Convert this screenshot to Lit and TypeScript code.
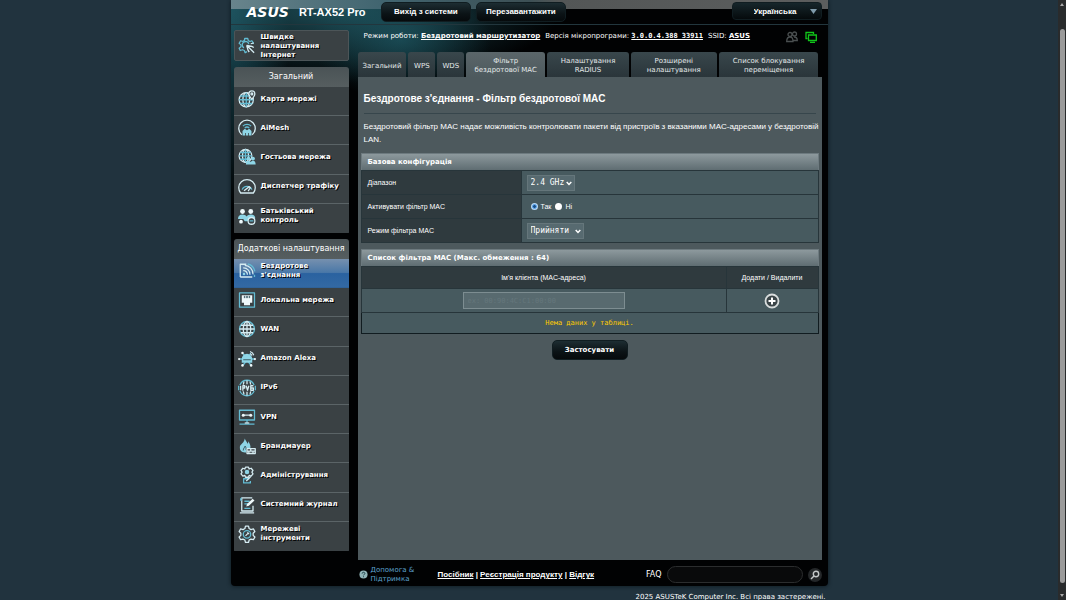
import { LitElement, html, css, svg, TemplateResult } from "lit";
import { customElement, property, state } from "lit/decorators.js";
import { classMap } from "lit/directives/class-map.js";

interface Entry {
  label: string;
  icon: string;
}

const GENERAL: Entry[] = [
  { label: "Карта мережі", icon: "map" },
  { label: "AiMesh", icon: "mesh" },
  { label: "Гостьова мережа", icon: "guest" },
  { label: "Диспетчер трафіку", icon: "traffic" },
  { label: "Батьківський контроль", icon: "family" },
];

const ADVANCED: Entry[] = [
  { label: "Бездротове з'єднання", icon: "wireless" },
  { label: "Локальна мережа", icon: "lan" },
  { label: "WAN", icon: "wan" },
  { label: "Amazon Alexa", icon: "alexa" },
  { label: "IPv6", icon: "ipv6" },
  { label: "VPN", icon: "vpn" },
  { label: "Брандмауер", icon: "firewall" },
  { label: "Адміністрування", icon: "admin" },
  { label: "Системний журнал", icon: "log" },
  { label: "Мережеві інструменти", icon: "tools" },
];

const TABS = [
  "Загальний",
  "WPS",
  "WDS",
  "Фільтр бездротової MAC",
  "Налаштування RADIUS",
  "Розширені налаштування",
  "Список блокування переміщення",
];

const ICONS: Record<string, TemplateResult> = {
  quick: svg`
    <path class="b" d="M12 19.500 9.500 21l-1-3-2.500-1-3 1-1.500-3L4 13v-2.500L1.500 8.500 3.500 5l3 1 2-1.500L9 2h4l.7 2.800L16 6l2.500-1 2 3.200-1 .8"/>
    <path class="b" d="M8 14.500a4.500 4.500 0 1 1 6.500-5"/>
    <path d="m11.500 11 10 10M11.500 11l2 7M11.500 11l7 1.500M15 20l-1.500-2M21 14l-2.500-1.500"/>
    <path d="M17 9l4-1"/>`,
  map: svg`
    <circle cx="11" cy="13" r="9.500"/>
    <ellipse cx="11" cy="13" rx="4.500" ry="9.500"/>
    <path class="b" d="M11 3.500v19M1.500 13h19M3 8h13M3 18h16"/>
    <path class="hole" d="M18.500 12.500c-3-4-4-5.200-4-7.200a4 4 0 0 1 8 0c0 2-1 3.200-4 7.200z"/>
    <circle cx="18.500" cy="5.200" r="1.200"/>`,
  mesh: svg`
    <path d="M5 21a11 11 0 1 1 14 0"/>
    <path class="b" d="M6.500 9.500a8 8 0 0 1 11 0M9 12a4.500 4.500 0 0 1 6 0"/>
    <path class="f" d="M6 22v-6l3-3 3 2 3-2 3 3v6h-3.500v-3.500h-1V22h-3v-3.500h-1V22z"/>`,
  guest: svg`
    <circle cx="10" cy="10.500" r="8.500"/>
    <ellipse cx="10" cy="10.500" rx="4" ry="8.500"/>
    <path class="b" d="M10 2v17M1.500 10.500h17M3 6h14M3 15h9"/>
    <circle class="f" cx="14" cy="14" r="2.500"/><circle class="f" cx="20" cy="14" r="2.500"/>
    <path class="f" d="M10.500 22c0-3 1-5 3.500-5 1.500 0 2.500.7 3 2 .5-1.300 1.500-2 3-2 2.500 0 3.500 2 3.500 5z"/>`,
  traffic: svg`
    <path d="M3.500 20a11 11 0 1 1 17 0z"/>
    <path class="b" d="M5.500 15.500a7 7 0 0 1 13 0"/>
    <path d="m8 17 7-5.500 1.500 1.500-3 4.500"/>`,
  family: svg`
    <circle class="w" cx="6" cy="6" r="3.200"/><circle class="w" cx="17" cy="6" r="3.200"/>
    <path class="f" d="M0 16c0-4 2-6 6-6 2.500 0 4 1 5.500 2.500C13 11 14.500 10 17 10c4 0 6 2 6 5l-8 1-2 3H9l-2-3z"/>
    <circle class="w" cx="4" cy="19.500" r="2.500"/>
    <circle class="hole" cx="18" cy="18.500" r="4.500"/>
    <path class="b" d="M15.500 18.500h5"/>`,
  wireless: svg`
    <path d="M3 20V3h8M3 20h16"/>
    <circle class="f" cx="8" cy="16" r="1.800"/>
    <path d="M7 11.500a5 5 0 0 1 5.500 5.500M7 8a8.500 8.500 0 0 1 9 9M9 4.500A11.500 11.500 0 0 1 20 16.500"/>
    <path class="b" d="M13 2.500a13 13 0 0 1 9.500 10M22 20v-3"/>`,
  lan: svg`
    <path class="b" d="M2 2.500h20v19H2z"/>
    <path class="w" d="M5 5.500h14v10h-3v3.500H8v-3.500H5z"/>
    <path class="d" d="M8.500 6.500v3M11 6.500v3M13 6.500v3M15.500 6.500v3"/>`,
  wan: svg`
    <circle class="b" cx="12" cy="12" r="10"/>
    <ellipse cx="12" cy="12" rx="5" ry="10"/>
    <path d="M12 2v20M2 12h20M4 7h16M4 17h16"/>`,
  alexa: svg`
    <path class="b" d="M2 12h20M7 5l3 4M17 4l-3 5M7 20l3-4M17 20l-3-4"/>
    <circle class="w" cx="1.500" cy="12" r="1.500"/><circle class="w" cx="22.500" cy="12" r="1.500"/>
    <circle class="w" cx="6" cy="4" r="1.700"/><circle class="w" cx="6" cy="20.500" r="1.700"/><circle class="w" cx="17.500" cy="20.500" r="1.700"/>
    <path class="f" d="M5 12a7 7 0 0 1 14 0v5H5z"/>
    <path class="d" d="M7 13h10"/>
    <path d="M16 2a7 7 0 0 1 5 5M16 5a4 4 0 0 1 2.500 2.500"/>`,
  ipv6: svg`
    <path class="b" d="M2.500 8a10.300 10.300 0 0 1 19 0M2.500 16a10.300 10.300 0 0 0 19 0M0.900 9v6M23.100 9v6"/>
    <path d="M12 2v5M12 17v5M8 3.500l-1 4M16 3.500l1 4M7 16.500l1 4M17 16.500l-1 4"/>
    <path d="M3.500 9v6M6.500 15.500V9H9v3H6.500M11 9l1.700 6L14.500 9M20.500 9H17v6h3.500v-3H17"/>`,
  vpn: svg`
    <path class="b" d="M2 3h20v13H2zM12 16v4M2 21.500h20"/>
    <path d="M7 9.500h10"/>
    <circle class="w" cx="7" cy="9.500" r="2"/><circle class="w" cx="17" cy="9.500" r="2"/>
    <path d="M9 20h6"/>`,
  firewall: svg`
    <path class="f" d="M9 2c1 3 3 4 3.500 7 1-1 1.200-2 1-3.500 2.500 3 3.500 6 3 9H11v6c-6 1-9-3-8.500-7.500C3 9.500 8.500 8 9 2z"/>
    <path class="d" d="M7 18c0-3 2-4 2.500-6 1 1.500 1.500 3 1 5"/>
    <path d="M12 15.500h11v6.500H12zM12 18.700h11M17 15.500v3M20 18.700v3M14.500 18.700v3"/>`,
  admin: svg`
    <path d="M10 1.500h4l.8 2.500L17.500 3l2.500 3-1.500 2.200 1.500 2.300-2.500 3-2.700-1-.8 2.500h-4l-.8-2.500-2.700 1-2.500-3 1.500-2.300L4 6l2.500-3 2.700 1z"/>
    <circle class="f" cx="12" cy="8" r="3"/>
    <path class="b" d="M15 17H7.500v5.500h9V20"/><path d="m11 20 6-6"/>`,
  log: svg`
    <path d="M20 13v7H5V2.500h14M2.500 22.500h19"/>
    <path class="b" d="M5 3c-2 0-2 3 0 3M8.500 7h7M8.500 10.500h5M8.500 16.500h8"/>
    <path class="w" d="m11 14 1-3.500 7.500-7 2.500 2.500-7.500 7z"/>`,
  tools: svg`
    <path d="M10 1.500h4l.8 3.200 2.500 1.400 3.200-.9 2 3.500-2.300 2.300v2.800l2.300 2.300-2 3.500-3.200-.9-2.500 1.400-.8 3.200h-4l-.8-3.200-2.500-1.400-3.200.9-2-3.500 2.300-2.300V11L1.500 8.700l2-3.500 3.200.9 2.500-1.400z"/>
    <circle class="b" cx="12" cy="12.400" r="5"/>
    <path d="m10 14.500 3-3M13 9.500l.2 1.800 1.800.2"/>`,
};

@customElement("menu-icon")
export class MenuIcon extends LitElement {
  @property() name = "";

  static styles = css`
    :host {
      display: block;
      width: 18px;
      height: 18px;
    }
    svg {
      display: block;
      width: 100%;
      height: 100%;
      fill: none;
      stroke: #d5ecf2;
      stroke-width: 1.7;
      stroke-linejoin: round;
    }
    .b { stroke: #63bcd3; }
    .w { fill: #eef8fa; stroke: none; }
    .f { fill: #8ed5e6; stroke: none; }
    .d { stroke: #3b5964; stroke-width: 1.3; }
    .hole { fill: #3a4144; }
  `;

  render() {
    return html`<svg viewBox="0 0 24 24" aria-hidden="true">${ICONS[this.name]}</svg>`;
  }
}

@customElement("side-menu")
export class SideMenu extends LitElement {
  @property() heading = "";
  @property() current = "";
  @property({ attribute: false }) entries: Entry[] = [];

  static styles = css`
    :host {
      display: flex;
      flex-direction: column;
      overflow: hidden;
      border-radius: 3px 3px 1px 1px;
      color: #fff;
      font-family: "DejaVu Sans", Verdana, sans-serif;
    }
    .heading {
      margin: 0;
      height: 20px;
      background: linear-gradient(#4a5356, #565e60);
      font-size: 8px;
      font-weight: 400;
      line-height: 20px;
      text-align: center;
      white-space: nowrap;
    }
    .list {
      display: grid;
      grid-auto-rows: 1fr;
      flex: 1;
      margin: 0;
      padding: 0;
      list-style: none;
    }
    .item { display: grid; }
    .link {
      box-sizing: border-box;
      display: grid;
      grid-template-columns: 18px 1fr;
      align-items: center;
      gap: 5px;
      min-height: 29px;
      padding: 0 3px 4px 4px;
      border-bottom: 1px solid #5b6467;
      background: #3a4144;
      color: #fff;
      font-size: 7px;
      font-weight: 700;
      line-height: 9px;
      text-decoration: none;
      text-shadow: 1px 1px 0 #000;
    }
    .item:last-child .link {
      border-bottom-color: #3a4144;
    }
    .link.current {
      border-bottom-color: #2f6299;
      background: linear-gradient(#7690ae, #4a78a8 48%, #2a62a0 52%, #3369a3);
    }
  `;

  render() {
    return html`
      <h2 class="heading">${this.heading}</h2>
      <ul class="list">
        ${this.entries.map(
          (e) => html`<li class="item">
            <a href="#" class=${classMap({ link: true, current: e.label === this.current })}>
              <menu-icon name=${e.icon}></menu-icon><span>${e.label}</span>
            </a>
          </li>`
        )}
      </ul>
    `;
  }
}

@customElement("app-root")
export class AppRoot extends LitElement {
  @state() private enabled = true;

  static styles = css`
    :host {
      display: flex;
      height: 100vh;
      overflow: hidden;
      background: #21333e;
      color: #fff;
      font-family: "DejaVu Sans", Verdana, sans-serif;
      font-size: 7px;
      line-height: 9px;
    }
    * { box-sizing: border-box; }
    button, input, select { font: inherit; color: inherit; margin: 0; }
    a { color: inherit; }

    .page { flex: 1; min-width: 0; }
    .wrap { width: 100%; max-width: 597px; margin: 0 auto; }
    .shell {
      padding: 0 6px 0 3px;
      border-radius: 0 0 4px 4px;
      background:
        radial-gradient(ellipse 220px 75px at 110px 8px, #24606ccc, transparent),
        radial-gradient(ellipse 90px 60px at 170px 40px, #1b5561aa, transparent),
        radial-gradient(ellipse 60px 210px at 0 0, #1a4c58, transparent),
        #010203;
      box-shadow: 0 0 4px #0b161c;
    }

    .bar {
      display: flex;
      align-items: flex-start;
      gap: 5px;
      height: 25px;
      margin: 0 -6px 5px -3px;
      padding: 2px 6px 0 16px;
      border-bottom: 1px solid #22363d;
      background: linear-gradient(90deg, #68848c, #416570 25%, #3d5055 50%, #535656 55%, #5c5e5e) 0 0 / 100% 9px no-repeat;
      font-family: "Liberation Sans", Arial, sans-serif;
    }
    .logo {
      font: italic 700 14px/20px "DejaVu Sans", Verdana, sans-serif;
    }
    .model { flex: 0 0 82px; margin: 0; padding-left: 5px; font-size: 11px; font-weight: 700; line-height: 20px; white-space: nowrap; }
    .btn {
      height: 20px;
      padding: 0 10px;
      border: 1px solid #101d21;
      border-radius: 5px;
      background: linear-gradient(#1d2d32, #0b1316 60%, #060a0c);
      font-family: "DejaVu Sans", Verdana, sans-serif;
      font-size: 7px;
      font-weight: 700;
      line-height: 16px;
    }
    .btn.top { width: 90px; padding: 0; font-family: "Liberation Sans", Arial, sans-serif; font-size: 8px; }
    .lang { position: relative; width: 90px; margin-left: auto; }
    .lang-select {
      width: 100%;
      height: 18px;
      padding: 0 20px 0 21px;
      border: 1px solid #101d21;
      border-radius: 4px;
      appearance: none;
      background: linear-gradient(#16262b, #050a0c);
      font-size: 8px;
      font-weight: 700;
    }
    .lang-arrow { position: absolute; right: 5px; top: 7px; width: 7px; height: 5px; fill: #7f9bab; pointer-events: none; }

    .columns { display: grid; grid-template-columns: 115px 1fr; gap: 9px; }
    .side { display: flex; flex-direction: column; gap: 6px; padding-bottom: 9px; }
    .general { min-height: 166px; }
    .advanced { min-height: 312px; }
    .quick {
      display: grid;
      grid-template-columns: 18px 1fr;
      align-items: center;
      gap: 5px;
      height: 31px;
      padding: 1px 3px 0;
      border: 1px solid #4c5558;
      border-radius: 2px;
      background: #3a4144;
      font-weight: 700;
      text-decoration: none;
      text-shadow: 1px 1px 0 #000;
    }
    .main { display: flex; flex-direction: column; }

    .status { display: flex; align-items: center; gap: 5px; height: 13px; padding: 0 5px 0 6px; white-space: nowrap; }
    .status a { font-weight: 700; }
    .status .mono { font-family: "DejaVu Sans Mono", monospace; font-size: 7px; }
    .state-icons { display: flex; gap: 7px; margin-left: auto; }
    .state-icons svg { width: 12px; height: 12px; fill: none; stroke: #4a4f50; stroke-width: 1.3; }
    .state-icons .on { stroke: #11c61a; }

    .tabs {
      display: grid;
      grid-template-columns: 49fr 27fr 27fr 79fr 82fr 86fr 100fr;
      gap: 2px;
      margin-top: 9px;
      padding-right: 3px;
    }
    .tab {
      display: flex;
      align-items: center;
      justify-content: center;
      height: 25px;
      padding: 3px 4px 0;
      border-radius: 3px 3px 0 0;
      background: linear-gradient(#39474c, #2a353a);
      color: #e4e9ea;
      text-align: center;
      text-decoration: none;
    }
    .tab.current { background: linear-gradient(#5b666a, #4d595d); }

    .panel {
      flex: 1;
      padding: 15px 3px;
      background: #4d595d;
      font-family: "Liberation Sans", Arial, sans-serif;
    }
    .title { margin: 0 3px; padding-bottom: 7px; border-bottom: 1px solid #37464c; font-size: 10px; font-weight: 700; line-height: 14px; }
    .intro { margin: 6px 0 7px 3px; font-size: 8px; line-height: 13px; }

    .grid { width: 100%; border-collapse: collapse; table-layout: fixed; border: 1px solid #27353a; }
    .grid + .grid { margin-top: 6px; }
    .grid caption {
      height: 17px;
      padding-left: 6px;
      border: 1px solid #6d7a7f;
      border-bottom: 0;
      background: linear-gradient(#8d999d, #5f6d72);
      font-family: "DejaVu Sans", Verdana, sans-serif;
      font-weight: 700;
      line-height: 16px;
      text-align: left;
    }
    .grid th, .grid td { height: 24px; padding: 0 5px; border: 1px solid #27353a; background: #475a5f; font-size: 7px; font-weight: 400; text-align: left; }
    .grid th { padding: 0 6px; background: #2f3a3e; }
    .grid .name { width: 160px; }
    .grid .act { width: 92px; }
    .grid .mid { text-align: center; }
    .grid .mid.head { height: 22px; }
    .grid .empty { height: 21px; border-color: #111c20; color: #fc0; font-family: "DejaVu Sans Mono", monospace; text-align: center; }

    .pick { position: relative; display: block; width: max-content; }
    .pick select {
      display: block;
      height: 16px;
      padding: 0 0 0 3px;
      border: 1px solid #65767b;
      appearance: none;
      background: #576a70;
      font-family: "DejaVu Sans Mono", monospace;
      font-size: 8px;
    }
    .band { width: 48px; }
    .mode { width: 57px; }
    .pick svg { position: absolute; right: 3px; top: 6px; width: 6px; height: 5px; fill: none; stroke: #fff; stroke-width: 1.5; pointer-events: none; }

    .radios { display: flex; gap: 4px; padding-left: 4px; }
    .radio { display: flex; align-items: center; gap: 3px; }
    .radio input { width: 7px; height: 7px; border-radius: 50%; appearance: none; background: #fff; }
    .radio input:checked { border: 1px solid #5aa7f0; background: #1b4f86; box-shadow: 0 0 0 1px #b9d8f2; width: 5px; height: 5px; margin: 1px; }

    .mac { display: block; width: 162px; height: 17px; margin: 0 auto; padding: 0 4px; border: 1px solid #7d8d91; background: #586a6f; font-family: "DejaVu Sans Mono", monospace; }
    .mac::placeholder { color: #65777c; opacity: 1; }
    .add { display: block; width: 16px; height: 16px; margin: 0 auto; padding: 0; border: 0; background: none; }
    .add svg { display: block; width: 16px; height: 16px; }
    .apply { display: block; min-width: 76px; margin: 6px auto 0; }

    .foot { display: flex; align-items: center; height: 26px; padding-top: 3px; padding-left: 125px; }
    .help { display: flex; align-items: center; gap: 3px; width: 79px; color: #5da3d0; text-decoration: none; }
    .help svg { width: 9px; height: 9px; }
    .links { font-family: "Liberation Sans", Arial, sans-serif; font-size: 8px; font-weight: 700; white-space: nowrap; }
    .search { display: flex; align-items: center; gap: 5px; margin-left: auto; font-size: 8px; }
    .search input { width: 136px; height: 17px; padding: 0 8px; border: 1px solid #2b2d2e; border-radius: 9px; background: #090a0b; }
    .search button { width: 14px; height: 14px; padding: 0; border: 0; border-radius: 50%; background: #242729; }
    .search svg { display: block; width: 14px; height: 14px; fill: none; stroke: #c4c8c9; stroke-width: 1.4; }
    .copy { padding: 7px 2px 0; font-weight: 400; text-align: right; white-space: nowrap; }

    .track { display: flex; flex-direction: column; align-items: center; gap: 20px; width: 8px; padding: 3px 1px; background: #292b2c; }
    .track svg { flex: none; width: 4px; height: 3px; fill: #a8a8a8; }
    .thumb { flex: 1; width: 5px; margin: 3px 0 -9px; border-radius: 3px; background: #9b9b9b; }
  `;

  private chevron() {
    return html`<svg viewBox="0 0 6 5" aria-hidden="true"><path d="m.7 1 2.300 2.500L5.300 1" /></svg>`;
  }

  render() {
    return html`
      <div class="page">
        <div class="wrap shell">
          <header class="bar">
            <span class="logo">ASUS</span>
            <h1 class="model">RT-AX52 Pro</h1>
            <button class="btn top">Вихід з системи</button>
            <button class="btn top">Перезавантажити</button>
            <div class="lang">
              <select class="lang-select" aria-label="Мова"><option>Українська</option></select>
              <svg class="lang-arrow" viewBox="0 0 7 5" aria-hidden="true"><path d="M0 0h7L3.500 5z" /></svg>
            </div>
          </header>

          <div class="columns">
            <nav class="side">
              <a class="quick" href="#"><menu-icon name="quick"></menu-icon><span>Швидке налаштування Інтернет</span></a>
              <side-menu class="general" heading="Загальний" .entries=${GENERAL}></side-menu>
              <side-menu class="advanced" heading="Додаткові налаштування" current="Бездротове з'єднання" .entries=${ADVANCED}></side-menu>
            </nav>

            <main class="main">
              <div class="status">
                <span>Режим роботи: <a href="#">Бездротовий маршрутизатор</a></span>
                <span>Версія мікропрограми: <a class="mono" href="#">3.0.0.4.388_33911</a></span>
                <span>SSID: <a href="#">ASUS</a></span>
                <div class="state-icons">
                  <svg viewBox="0 0 12 12" aria-hidden="true"><circle cx="4" cy="3.500" r="2" /><circle cx="8.500" cy="3" r="2" /><path d="M.7 10.500c0-3 1-4.500 3.300-4.500s3 1.500 3 4.500zM8 6c2.300 0 3.300 1 3.300 3.500H7.500" /></svg>
                  <svg class="on" viewBox="0 0 12 12" aria-hidden="true"><path d="M2.500 7.500H1v-6h7.500V3M3.500 4h7.800v5.500H3.500zM5 11.300h5" /></svg>
                </div>
              </div>
              <nav class="tabs">
                ${TABS.map((t, i) => html`<a href="#" class=${classMap({ tab: true, current: i === 3 })}>${t}</a>`)}
              </nav>

              <section class="panel">
                <h2 class="title">Бездротове з'єднання - Фільтр бездротової MAC</h2>
                <p class="intro">
                  Бездротовий фільтр MAC надає можливість контролювати пакети від пристроїв з вказаними MAC-адресами у
                  бездротовій LAN.
                </p>

                <table class="grid">
                  <caption>Базова конфігурація</caption>
                  <tr>
                    <th class="name"><label for="band">Діапазон</label></th>
                    <td><span class="pick"><select id="band" class="band"><option>2.4 GHz</option><option>5 GHz</option></select>${this.chevron()}</span></td>
                  </tr>
                  <tr>
                    <th class="name" id="enable">Активувати фільтр MAC</th>
                    <td>
                      <div class="radios" role="radiogroup" aria-labelledby="enable">
                        <label class="radio"><input type="radio" name="on" .checked=${this.enabled} @change=${() => (this.enabled = true)} />Так</label>
                        <label class="radio"><input type="radio" name="on" .checked=${!this.enabled} @change=${() => (this.enabled = false)} />Ні</label>
                      </div>
                    </td>
                  </tr>
                  <tr>
                    <th class="name"><label for="mode">Режим фільтра MAC</label></th>
                    <td><span class="pick"><select id="mode" class="mode"><option>Прийняти</option><option>Відхилити</option></select>${this.chevron()}</span></td>
                  </tr>
                </table>

                <table class="grid">
                  <caption>Список фільтра MAC (Макс. обмеження : 64)</caption>
                  <tr>
                    <th class="mid head">Ім'я клієнта (MAC-адреса)</th>
                    <th class="mid head act">Додати / Видалити</th>
                  </tr>
                  <tr>
                    <td><input class="mac" aria-label="Ім'я клієнта (MAC-адреса)" placeholder="ex: 00:90:4C:C1:00:00" /></td>
                    <td>
                      <button class="add" aria-label="Додати">
                        <svg viewBox="0 0 16 16"><circle cx="8" cy="8" r="6.500" fill="#3b4548" stroke="#d9dddd" stroke-width="1.800" /><path d="M8 4.500v7M4.500 8h7" stroke="#fff" stroke-width="2" /></svg>
                      </button>
                    </td>
                  </tr>
                  <tr><td class="empty" colspan="2">Нема даних у таблиці.</td></tr>
                </table>

                <button class="btn apply">Застосувати</button>
              </section>
            </main>
          </div>

          <footer class="foot">
            <a class="help" href="#">
              <svg viewBox="0 0 10 10" aria-hidden="true"><circle cx="5" cy="5" r="4.500" fill="#91b5b8" /><path d="M3.500 4c0-2 3-2 3 0 0 1-1.500 1-1.500 2M5 7v1" fill="none" stroke="#12363c" /></svg>
              <span>Допомога &amp;<br />Підтримка</span>
            </a>
            <span class="links"><a href="#">Посібник</a> | <a href="#">Реєстрація продукту</a> | <a href="#">Відгук</a></span>
            <form class="search" @submit=${(e: Event) => e.preventDefault()}>
              <label for="faq">FAQ</label>
              <input id="faq" type="text" />
              <button aria-label="Пошук"><svg viewBox="0 0 14 14"><circle cx="8" cy="6" r="2.700" /><path d="M6 8 3 11" /></svg></button>
            </form>
          </footer>
        </div>
        <p class="wrap copy">2025 ASUSTeK Computer Inc. Всі права застережені.</p>
      </div>
      <div class="track" aria-hidden="true">
        <svg viewBox="0 0 4 3"><path d="M0 3h4L2 0z" /></svg>
        <div class="thumb"></div>
        <svg viewBox="0 0 4 3"><path d="M0 0h4L2 3z" /></svg>
      </div>
    `;
  }
}
